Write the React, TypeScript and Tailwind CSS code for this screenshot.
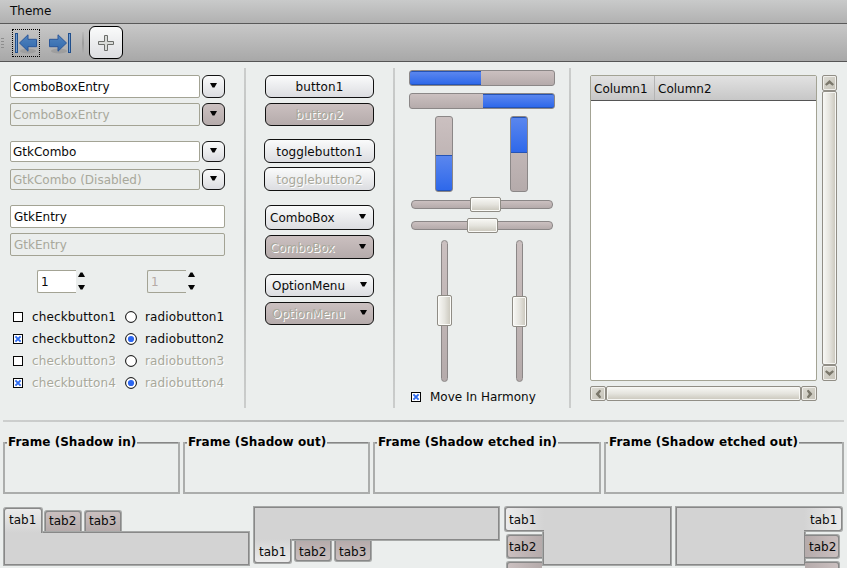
import React from 'react';
import clsx from 'clsx';

const LIGHT = 'bg-linear-to-b from-[#fafbfb] to-[#dcdde1]';
const MAUVE = 'bg-linear-to-b from-[#cbc0c0] to-[#b5abab]';
const KNOB_H = 'bg-linear-to-b from-[#f8f8f5] via-[#e5e4de] to-[#c9c6bb]';
const KNOB_V = 'bg-linear-to-r from-[#f8f8f5] via-[#e5e4de] to-[#c9c6bb]';
const EMBOSS = 'text-[#a8a89b] [text-shadow:1px_1px_0_#fff]';

function Down({ up = false }: { up?: boolean }) {
  return (
    <svg width="7" height="5" viewBox="0 0 7 5" className={clsx('block shrink-0', up && 'rotate-180')}>
      <path d="M0 0h7L4.5 4.5h-2z" fill="#050505" />
    </svg>
  );
}

function Entry({ text, off, className }: { text: string; off?: boolean; className: string }) {
  return (
    <div
      className={clsx(
        'flex items-center rounded-[2px] border border-[#a3a394] whitespace-nowrap',
        off ? 'text-[#a8a89b]' : 'bg-white',
        className,
      )}
    >
      {text}
    </div>
  );
}

function ComboEntry({ text, off, mauve, h }: { text: string; off?: boolean; mauve?: boolean; h: string }) {
  return (
    <div className={clsx('flex gap-[2px]', h)}>
      <Entry text={text} off={off} className="w-[190px] pl-[2px]" />
      <div
        className={clsx(
          'flex w-[23px] items-center justify-center rounded-[6px] border border-[#141414] pb-[3px]',
          mauve ? MAUVE : LIGHT,
        )}
      >
        <Down />
      </div>
    </div>
  );
}

function Spin({ off }: { off?: boolean }) {
  return (
    <div className="flex w-[49px] gap-[2px]">
      <div
        className={clsx(
          'flex h-[23px] w-[39px] items-center rounded-l-[2px] border border-r-0 border-[#a3a394] pl-[3px]',
          off ? 'text-[#b5aaa5]' : 'bg-white',
        )}
      >
        1
      </div>
      <div className="flex flex-col justify-between pt-[2px] pb-[3px]">
        <Down up />
        <Down />
      </div>
    </div>
  );
}

function Check({ on }: { on?: boolean }) {
  return (
    <svg width="10" height="10" viewBox="0 0 10 10" className="block shrink-0">
      <rect x=".5" y=".5" width="9" height="9" fill="#fff" stroke="#050505" />
      {on && <path d="M2.4 2.4l5.2 5.2M7.600 2.400l-5.200 5.200" stroke="#2f6cf0" strokeWidth="2" />}
    </svg>
  );
}

function Radio({ on }: { on?: boolean }) {
  return (
    <svg width="12" height="12" viewBox="0 0 12 12" className="block shrink-0">
      <circle cx="6" cy="6" r="5.4" fill="#fff" stroke="#050505" />
      {on && <circle cx="6" cy="6" r="3.1" fill="#2c67f0" />}
    </svg>
  );
}

function Button({ text, off, plain, className }: { text: string; off?: boolean; plain?: boolean; className: string }) {
  return (
    <div
      className={clsx(
        'flex items-center justify-center rounded-[6px] border border-[#111] tracking-[0.08px] whitespace-nowrap',
        off && !plain ? MAUVE : LIGHT,
        off && EMBOSS,
        className,
      )}
    >
      {text}
    </div>
  );
}

function Menu({ text, off, className, arrow }: { text: string; off?: boolean; className: string; arrow: string }) {
  return (
    <div
      className={clsx(
        'flex w-[109px] items-center justify-between rounded-[6px] border border-[#111]',
        off ? MAUVE : LIGHT,
        className,
      )}
    >
      <span className={clsx(off && EMBOSS)}>{text}</span>
      <span className={arrow}>
        <Down />
      </span>
    </div>
  );
}

function Rule() {
  return <div className="mt-[6px] h-[340px] w-[2px] shrink-0 bg-linear-to-b from-[#cbcdcc] via-[#b1b3b2] to-[#cbcdcc]" />;
}

const BAR = 'flex rounded-[3px] border border-[#8b8787]';
const FILL = 'bg-linear-to-b from-[#5a86ee] to-[#2e68ea]';

function HScale({ knob, className }: { knob: string; className?: string }) {
  return (
    <div className={clsx('relative ml-[2px] h-[9px] w-[142px] rounded-[4px] border border-[#8b8787]', MAUVE, className)}>
      <div className={clsx('absolute top-[-4px] h-[15px] w-[31px] rounded-[2px] border border-[#8f8c85] shadow-[inset_0_0_0_1px_#fbfbf8]', KNOB_H, knob)} />
    </div>
  );
}

function VScale({ knob }: { knob: string }) {
  return (
    <div className={clsx('relative h-[142px] w-[7px] rounded-[4px] border border-[#8b8787]', MAUVE)}>
      <div className={clsx('absolute left-[-5px] h-[31px] w-[15px] rounded-[2px] border border-[#8f8c85] shadow-[inset_0_0_0_1px_#fbfbf8]', KNOB_V, knob)} />
    </div>
  );
}

function ScrollButton({ rot, className }: { rot: string; className: string }) {
  return (
    <div className={clsx('flex shrink-0 items-center justify-center rounded-[2px] border border-[#918e86] bg-linear-to-br from-[#dddcd5] to-[#c5c2b7] shadow-[inset_0_0_0_1px_#f0efeb]', className)}>
      <svg width="9" height="6" viewBox="0 0 9 6" className={clsx('block shrink-0', rot)}>
        <path d="M0 4.2L4.5 0 9 4.2 7.5 5.7 4.5 3.6 1.5 5.7z" fill="#7b786c" />
      </svg>
    </div>
  );
}

function Frame({ title, w, tw }: { title: string; w: string; tw: string }) {
  return (
    <div className={clsx('flex h-[52px] flex-col border-x-2 border-b-2 border-[#abadac]', w)}>
      <div className="flex h-[2px] items-center">
        <div className="h-[2px] w-[2px] border-t border-[#868686] bg-[#abadac]" />
        <div className={clsx('shrink-0 pb-[2px] pl-px font-bold tracking-[0.06px] whitespace-nowrap text-black', tw)}>{title}</div>
        <div className="h-[2px] grow border-t border-[#868686] bg-[#abadac]" />
      </div>
    </div>
  );
}

const PANEL = 'border border-[#a6a8a7] bg-[#d3d3d3] shadow-[inset_0_0_0_1px_#888]';
const TOP = 'rounded-t-[3px] border border-b-0 border-[#a6a8a7] shadow-[inset_1px_1px_0_#888,inset_-1px_1px_0_#888]';
const BOTTOM = 'rounded-b-[3px] border border-t-0 border-[#a6a8a7] shadow-[inset_1px_-1px_0_#888,inset_-1px_-1px_0_#888]';
const LEFT = 'rounded-l-[3px] border border-r-0 border-[#a6a8a7] shadow-[inset_1px_1px_0_#888,inset_1px_-1px_0_#888]';
const RIGHT = 'rounded-r-[3px] border border-l-0 border-[#a6a8a7] shadow-[inset_-1px_1px_0_#888,inset_-1px_-1px_0_#888]';

export default function App() {
  return (
    <div className="flex h-[568px] w-[847px] flex-col overflow-hidden bg-[#ebeeed] font-['DejaVu_Sans',sans-serif] text-[12px] leading-[14px] text-[#0a0a0a]">
      <header className="flex h-[24px] shrink-0 items-center border-b border-[#595959] bg-linear-to-b from-[#c9caca] to-[#b1b1b1] pb-px pl-[10px]">
        Theme
      </header>
      <div className="flex h-[38px] shrink-0 items-start border-b border-[#555] bg-linear-to-b from-[#c8c8c8] to-[#a8a8a8]">
        <svg width="4" height="12" viewBox="0 0 4 12" className="mt-[13px] block">
          <path d="M1 1.5h3M1 4.5h3M1 7.5h3M1 10.5h3" stroke="#8d8d8d" />
        </svg>
        <div className="mt-[5px] ml-[8px] flex h-[28px] w-[28px] items-start border border-dotted border-black pt-[3px] pl-[2px]">
          <svg width="24" height="22" viewBox="0 0 24 22" className="block">
            <defs>
              <linearGradient id="arrow" x1="0" y1="0" x2="0" y2="1">
                <stop offset="0" stopColor="#5285c0" />
                <stop offset="1" stopColor="#3068ab" />
              </linearGradient>
            </defs>
            <ellipse cx="13" cy="18" rx="8" ry="2.5" fill="#000" opacity=".1" />
            <rect x=".5" y=".5" width="2" height="19" fill="#6f9bd0" stroke="#214f8c" />
            <path d="M4.5 10L13 1.8v4.500h8.500v7.400H13v4.500z" fill="url(#arrow)" stroke="#2a579a" strokeLinejoin="round" />
          </svg>
        </div>
        <svg width="24" height="22" viewBox="0 0 24 22" className="mt-[9px] ml-[9px] block">
          <ellipse cx="10" cy="18" rx="8" ry="2.500" fill="#000" opacity=".1" />
          <rect x="19.500" y=".5" width="2" height="19" fill="#6f9bd0" stroke="#214f8c" />
          <path d="M17.500 10L9 1.800v4.500H.5v7.400H9v4.500z" fill="url(#arrow)" stroke="#2a579a" strokeLinejoin="round" />
        </svg>
        <div className="mt-[8px] ml-[9px] h-[22px] w-[2px] bg-linear-to-b from-[#bababa] via-[#9c9c9c] to-[#afafaf]" />
        <div className="mt-[2px] ml-[5px] flex h-[33px] w-[34px] items-center justify-center rounded-[6px] border border-black bg-linear-to-b from-[#fafbfb] to-[#dddee1]">
          <svg width="16" height="16" viewBox="0 0 16 16" className="block">
            <path d="M6.500.5h3v6h6v3h-6v6h-3v-6h-6v-3h6z" fill="#d9dbd8" stroke="#6c6e6b" />
          </svg>
        </div>
      </div>

      <main className="flex h-[346px] shrink-0">
        <section className="flex w-[244px] shrink-0 flex-col pt-[13px] pl-[10px]">
          <ComboEntry text="ComboBoxEntry" h="h-[23px]" />
          <div className="h-[5px]" />
          <ComboEntry text="ComboBoxEntry" off mauve h="h-[23px]" />
          <div className="h-[15px]" />
          <ComboEntry text="GtkCombo" h="h-[21px]" />
          <div className="h-[7px]" />
          <ComboEntry text="GtkCombo (Disabled)" off h="h-[21px]" />
          <Entry text="GtkEntry" className="mt-[15px] h-[23px] w-[215px] pl-[3px]" />
          <Entry text="GtkEntry" off className="mt-[5px] h-[23px] w-[215px] pl-[3px]" />
          <div className="mt-[14px] ml-[27px] flex gap-[61px]">
            <Spin />
            <Spin off />
          </div>
          <div className="mt-[13px] ml-[3px] flex flex-col">
            {[1, 2, 3, 4].map((n) => (
              <div key={n} className="flex h-[22px] items-center tracking-[0.13px]">
                <Check on={n % 2 === 0} />
                <span className={clsx('ml-[9px] w-[93px]', n > 2 && EMBOSS)}>checkbutton{n}</span>
                <Radio on={n % 2 === 0} />
                <span className={clsx('ml-[8px]', n > 2 && EMBOSS)}>radiobutton{n}</span>
              </div>
            ))}
          </div>
        </section>
        <Rule />
        <section className="flex w-[147px] shrink-0 flex-col pt-[13px] pl-[19px]">
          <Button text="button1" className="h-[23px] w-[109px]" />
          <Button text="button2" off className="mt-[5px] h-[23px] w-[109px]" />
          <Button text="togglebutton1" className="mt-[13px] -ml-px h-[24px] w-[111px] pt-px" />
          <Button text="togglebutton2" off plain className="mt-[4px] -ml-px h-[24px] w-[111px] pt-px" />
          <Menu text="ComboBox" className="mt-[14px] h-[25px] pl-[4px]" arrow="mr-[7px] mb-[3px]" />
          <Menu text="ComboBox" off className="mt-[5px] h-[24px] pt-px pl-[4px]" arrow="mr-[7px] mb-[3px]" />
          <Menu text="OptionMenu" className="mt-[15px] h-[23px] pl-[6px]" arrow="mr-[6px] mb-[3px]" />
          <Menu text="OptionMenu" off className="mt-[5px] h-[23px] pl-[6px]" arrow="mr-[6px] mb-[3px]" />
        </section>
        <Rule />
        <section className="flex w-[174px] shrink-0 flex-col pt-[8px] pl-[14px]">
          <div className={clsx('h-[16px] w-[146px]', BAR, MAUVE)}>
            <div className={clsx('w-[71px] rounded-l-[2px] border-y border-[#2453b5]', FILL)} />
          </div>
          <div className={clsx('mt-[7px] h-[16px] w-[146px] justify-end', BAR, MAUVE)}>
            <div className={clsx('w-[71px] rounded-r-[2px] border-y border-[#2453b5]', FILL)} />
          </div>
          <div className="mt-[7px] ml-[26px] flex gap-[57px]">
            <div className={clsx('h-[76px] w-[18px] flex-col justify-end', BAR, MAUVE)}>
              <div className={clsx('h-[36px] rounded-b-[2px] border-y border-[#2453b5]', FILL)} />
            </div>
            <div className={clsx('h-[76px] w-[18px] flex-col', BAR, MAUVE)}>
              <div className={clsx('h-[36px] rounded-t-[2px] border-y border-[#2453b5]', FILL)} />
            </div>
          </div>
          <HScale knob="left-[58px]" className="mt-[8px]" />
          <HScale knob="left-[55px]" className="mt-[12px]" />
          <div className="mt-[10px] ml-[32px] flex gap-[68px]">
            <VScale knob="top-[54px]" />
            <VScale knob="top-[55px]" />
          </div>
          <div className="mt-[8px] ml-[2px] flex items-center gap-[9px] whitespace-nowrap">
            <Check on />
            <span>Move In Harmony</span>
          </div>
        </section>
        <Rule />
        <section className="flex flex-col pt-[13px] pl-[19px]">
          <div className="flex gap-[5px]">
            <div className="h-[306px] w-[227px] rounded-[2px] border border-[#a3a394] bg-white">
              <div className="flex h-[25px] items-stretch border-b border-[#555] bg-linear-to-b from-[#e2e2e2] to-[#c7c7c7]">
                <div className="flex w-[64px] items-center border-r border-[#b4b4b4] pt-[2px] pl-[3px]">Column1</div>
                <div className="flex items-center pt-[2px] pl-[3px]">Column2</div>
              </div>
            </div>
            <div className="flex h-[306px] w-[15px] flex-col">
              <ScrollButton rot="" className="h-[16px]" />
              <div className={clsx('grow rounded-[2px] border border-[#918e86] shadow-[inset_0_0_0_1px_#f6f6f3]', KNOB_V)} />
              <ScrollButton rot="rotate-180" className="h-[16px]" />
            </div>
          </div>
          <div className="mt-[5px] flex h-[15px] w-[227px]">
            <ScrollButton rot="-rotate-90" className="w-[16px]" />
            <div className={clsx('grow rounded-[2px] border border-[#918e86] shadow-[inset_0_0_0_1px_#f6f6f3]', KNOB_H)} />
            <ScrollButton rot="rotate-90" className="w-[16px]" />
          </div>
        </section>
      </main>

      <div className="mt-[12px] ml-[3px] h-[2px] w-[841px] shrink-0 bg-linear-to-r from-[#cdcfce] via-[#abadac] to-[#cdcfce]" />
      <div className="mt-[20px] ml-[3px] flex shrink-0 gap-[3px]">
        <Frame title="Frame (Shadow in)" w="w-[177px]" tw="w-[130px]" />
        <Frame title="Frame (Shadow out)" w="w-[187px]" tw="w-[140px]" />
        <Frame title="Frame (Shadow etched in)" w="w-[228px]" tw="w-[181px]" />
        <Frame title="Frame (Shadow etched out)" w="w-[240px]" tw="w-[191px]" />
      </div>

      <div className="mt-[12px] ml-[3px] flex h-[62px] shrink-0 items-start">
        <div className="flex w-[247px] flex-col pt-px">
          <div className="z-10 flex h-[24px] items-end">
            <div className={clsx('-mb-[2px] h-[26px] w-[40px] bg-linear-to-b from-[#ececec] to-[#d3d3d3] pt-[5px] pl-[5px]', TOP)}>tab1</div>
            <div className={clsx('ml-px h-[21px] w-[38px] pt-[3px] pl-[4px]', TOP, MAUVE)}>tab2</div>
            <div className={clsx('ml-[2px] h-[21px] w-[38px] pt-[3px] pl-[4px]', TOP, MAUVE)}>tab3</div>
          </div>
          <div className={clsx('h-[35px]', PANEL)} />
        </div>
        <div className="ml-[3px] flex w-[247px] flex-col">
          <div className={clsx('h-[35px]', PANEL)} />
          <div className="z-10 flex h-[24px] items-start">
            <div className={clsx('-mt-[2px] h-[25px] w-[39px] bg-linear-to-b from-[#d3d3d3] to-[#ececec] pt-[6px] pl-[5px]', BOTTOM)}>tab1</div>
            <div className={clsx('ml-[2px] h-[21px] w-[38px] bg-linear-to-b from-[#b5abab] to-[#cbc0c0] pt-[4px] pl-[4px]', BOTTOM)}>tab2</div>
            <div className={clsx('ml-[2px] h-[21px] w-[38px] bg-linear-to-b from-[#b5abab] to-[#cbc0c0] pt-[4px] pl-[4px]', BOTTOM)}>tab3</div>
          </div>
        </div>
        <div className="ml-[4px] flex w-[168px]">
          <div className="z-10 flex w-[38px] flex-col items-end">
            <div className={clsx('-mr-[2px] h-[26px] w-[40px] bg-linear-to-r from-[#ececec] to-[#d3d3d3] pt-[6px] pl-[4px]', LEFT)}>tab1</div>
            <div className={clsx('mt-[2px] h-[25px] w-[36px] shrink-0 bg-linear-to-r from-[#cbc0c0] to-[#b5abab] pt-[5px] pl-[2px]', LEFT)}>tab2</div>
            <div className={clsx('mt-[2px] h-[25px] w-[36px] shrink-0 bg-linear-to-r from-[#cbc0c0] to-[#b5abab]', LEFT)} />
          </div>
          <div className={clsx('h-[60px] w-[130px]', PANEL)} />
        </div>
        <div className="ml-[3px] flex w-[169px]">
          <div className={clsx('h-[60px] w-[131px]', PANEL)} />
          <div className="z-10 flex w-[38px] flex-col items-start">
            <div className={clsx('-ml-[2px] h-[26px] w-[39px] bg-linear-to-r from-[#d3d3d3] to-[#ececec] pt-[6px] pl-[6px]', RIGHT)}>tab1</div>
            <div className={clsx('mt-[2px] -ml-px h-[25px] w-[35px] shrink-0 bg-linear-to-r from-[#b5abab] to-[#cbc0c0] pt-[5px] pl-[4px]', RIGHT)}>tab2</div>
            <div className={clsx('mt-[2px] -ml-px h-[25px] w-[35px] shrink-0 bg-linear-to-r from-[#b5abab] to-[#cbc0c0]', RIGHT)} />
          </div>
        </div>
      </div>
    </div>
  );
}
